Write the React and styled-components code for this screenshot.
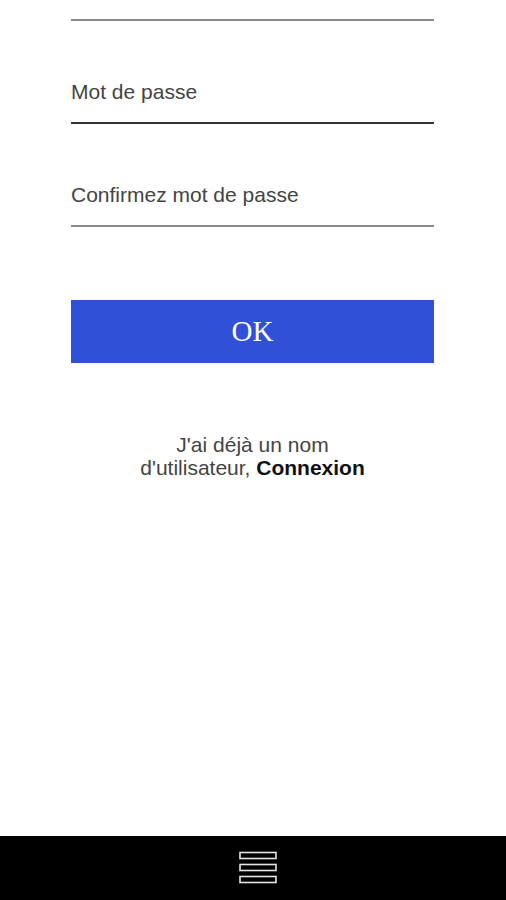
import React from "react";
import styled, { createGlobalStyle } from "styled-components";

const Global = createGlobalStyle`
  html, body { margin: 0; padding: 0; background: #ffffff; }
  body { font-family: "Liberation Sans", Arial, sans-serif; }
  * { box-sizing: border-box; }
`;

const Screen = styled.div`
  height: 100vh;
  display: flex;
  flex-direction: column;
  overflow: hidden;
`;

const Main = styled.main`
  flex: 1;
  display: flex;
  flex-direction: column;
  padding-left: 71px;
`;

const Form = styled.form`
  width: 363px;
  display: flex;
  flex-direction: column;
`;

const Underline = styled.div`
  margin-top: 19px;
  height: 2px;
  background: #8a8a8a;
`;

const Field = styled.label`
  display: block;
  padding: 59px 0 18px;
  border-bottom: 2px solid ${(p) => (p.$active ? "#333333" : "#8a8a8a")};
`;

const Placeholder = styled.span`
  display: block;
  font-size: 21px;
  line-height: 24px;
  color: #444444;
`;

const Submit = styled.button`
  margin-top: 73px;
  height: 63px;
  border: none;
  background: #3050d8;
  color: #ffffff;
  font-family: "Liberation Serif", "Times New Roman", serif;
  font-size: 29px;
  cursor: pointer;
`;

const LoginNote = styled.p`
  width: 363px;
  margin: 70px 0 0;
  text-align: center;
  font-size: 21px;
  line-height: 23px;
  color: #444444;
`;

const LoginLink = styled.a`
  color: #111111;
  font-weight: bold;
  text-decoration: none;
`;

const NavBar = styled.footer`
  height: 64px;
  background: #000000;
  display: flex;
  align-items: center;
  justify-content: center;
`;

const MenuSvg = styled.svg`
  margin-left: 10px;
`;

const MenuIcon = () => (
  <MenuSvg width="40" height="34" viewBox="0 0 40 34" aria-hidden="true">
    {[1, 13, 25].map((y) => (
      <rect
        key={y}
        x="2"
        y={y + 0.5}
        width="36"
        height="6"
        fill="#000"
        stroke="#e4e4e4"
        strokeWidth="1.6"
      />
    ))}
  </MenuSvg>
);

export default function App() {
  return (
    <Screen>
      <Global />
      <Main>
        <Form onSubmit={(e) => e.preventDefault()}>
          <Underline />
          <Field $active>
            <Placeholder>Mot de passe</Placeholder>
          </Field>
          <Field>
            <Placeholder>Confirmez mot de passe</Placeholder>
          </Field>
          <Submit type="submit">OK</Submit>
        </Form>
        <LoginNote>
          J'ai déjà un nom
          <br />
          d'utilisateur, <LoginLink href="#">Connexion</LoginLink>
        </LoginNote>
      </Main>
      <NavBar>
        <MenuIcon />
      </NavBar>
    </Screen>
  );
}
